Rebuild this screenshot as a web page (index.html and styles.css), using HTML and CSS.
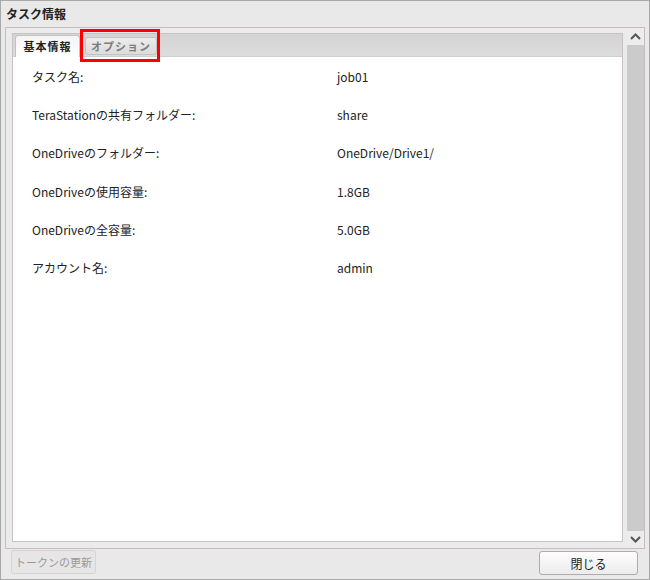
FILE: index.html
```html
<!DOCTYPE html>
<html lang="ja">
<head>
<meta charset="utf-8">
<title>タスク情報</title>
<link rel="stylesheet" href="styles.css">
</head>
<body>
<div class="window">
  <div class="title">タスク情報</div>
  <div class="body">
    <div class="panel-area">
      <div class="tabpanel">
        <div class="tabstrip">
          <div class="tab active">基本情報</div>
          <div class="tab inactive">オプション</div>
          <div class="highlight"></div>
        </div>
        <div class="content">
          <div class="row"><span class="label">タスク名:</span><span class="value">job01</span></div>
          <div class="row"><span class="label">TeraStationの共有フォルダー:</span><span class="value">share</span></div>
          <div class="row"><span class="label">OneDriveのフォルダー:</span><span class="value">OneDrive/Drive1/</span></div>
          <div class="row"><span class="label">OneDriveの使用容量:</span><span class="value">1.8GB</span></div>
          <div class="row"><span class="label">OneDriveの全容量:</span><span class="value">5.0GB</span></div>
          <div class="row"><span class="label">アカウント名:</span><span class="value">admin</span></div>
        </div>
      </div>
    </div>
    <div class="scrollbar">
      <div class="sb-btn">
        <svg width="11" height="7" viewBox="0 0 11 7"><path d="M1 6 L5.5 1.5 L10 6" fill="none" stroke="#555" stroke-width="2"/></svg>
      </div>
      <div class="sb-track"></div>
      <div class="sb-btn">
        <svg width="11" height="7" viewBox="0 0 11 7"><path d="M1 1 L5.5 5.5 L10 1" fill="none" stroke="#555" stroke-width="2"/></svg>
      </div>
    </div>
  </div>
  <div class="footer">
    <button class="btn disabled" type="button">トークンの更新</button>
    <button class="btn close" type="button">閉じる</button>
  </div>
</div>
</body>
</html>
```
FILE: styles.css
```css
* { box-sizing: border-box; }
html, body { margin: 0; padding: 0; }
body {
  width: 650px;
  height: 580px;
  font-family: "Noto Sans CJK JP", "Noto Sans", sans-serif;
  font-size: 12px;
  color: #222;
  background: #e9e9e9;
}
.window {
  width: 650px;
  height: 580px;
  border: 1px solid #a8a8a8;
  background: #e9e9e9;
  display: flex;
  flex-direction: column;
}
.title {
  height: 26px;
  padding-left: 5px;
  font-weight: bold;
  font-size: 12px;
  line-height: 26px;
  color: #222;
}
.body {
  margin: 0 4px 0 4px;
  height: 522px;
  border: 1px solid #c9bcc1;
  background: #ebebeb;
  display: flex;
}
.panel-area {
  flex: 1;
  padding: 5px 4px 6px 6px;
  display: flex;
}
.tabpanel {
  flex: 1;
  border: 1px solid #c9c3c6;
  background: #fff;
  display: flex;
  flex-direction: column;
}
.tabstrip {
  position: relative;
  height: 23px;
  background: linear-gradient(#d4d4d4, #dcdcdc);
  border-bottom: 1px solid #cfcfcf;
  display: flex;
  align-items: flex-end;
  padding-left: 2px;
  gap: 5px;
}
.tab {
  height: 20px;
  line-height: 19px;
  font-weight: bold;
  font-size: 11px;
  letter-spacing: 1px;
  border: 1px solid #c3c3c3;
  border-bottom: none;
  border-radius: 3px 3px 0 0;
  text-align: center;
}
.tab.active {
  width: 65px;
  height: 22px;
  margin-bottom: -1px;
  background: linear-gradient(#f4f4f4, #ffffff);
  color: #222;
  line-height: 21px;
}
.tab.inactive {
  width: 72px;
  height: 18px;
  line-height: 17px;
  margin-bottom: 1px;
  background: linear-gradient(#ececec, #dcdcdc);
  color: #7c7c7c;
  border-color: #c4c4c4;
  border-bottom: 1px solid #c4c4c4;
  border-radius: 3px;
}
.highlight {
  position: absolute;
  left: 67px;
  top: -5px;
  width: 80px;
  height: 33px;
  border: 3px solid #ff0000;
}
.content {
  flex: 1;
  padding: 0 0 0 19px;
}
.row {
  height: 38.3px;
  display: flex;
  align-items: center;
}
.label {
  width: 305px;
}
.scrollbar {
  width: 17px;
  display: flex;
  flex-direction: column;
  background: #ececec;
}
.sb-btn {
  height: 17px;
  display: flex;
  align-items: center;
  justify-content: center;
}
.sb-track {
  flex: 1;
  background: #cbcbcb;
}
.footer {
  flex: 1;
  display: flex;
  justify-content: space-between;
  align-items: flex-start;
  padding: 1px 11px 0 10px;
}
.btn {
  height: 24px;
  font-family: "Noto Sans CJK JP", "Noto Sans", sans-serif;
  font-size: 12px;
  border: 1px solid #c4c4c4;
  border-radius: 3px;
  padding: 0;
  white-space: nowrap;
}
.btn.disabled {
  width: 85px;
  font-size: 11px;
  color: #9a9a9a;
  background: #e6e6e6;
  border-color: #d4d4d4;
}
.btn.close {
  width: 99px;
  margin-top: 1px;
  color: #222;
  background: linear-gradient(#fdfdfd, #ececec);
  border-color: #adadad;
}
```
